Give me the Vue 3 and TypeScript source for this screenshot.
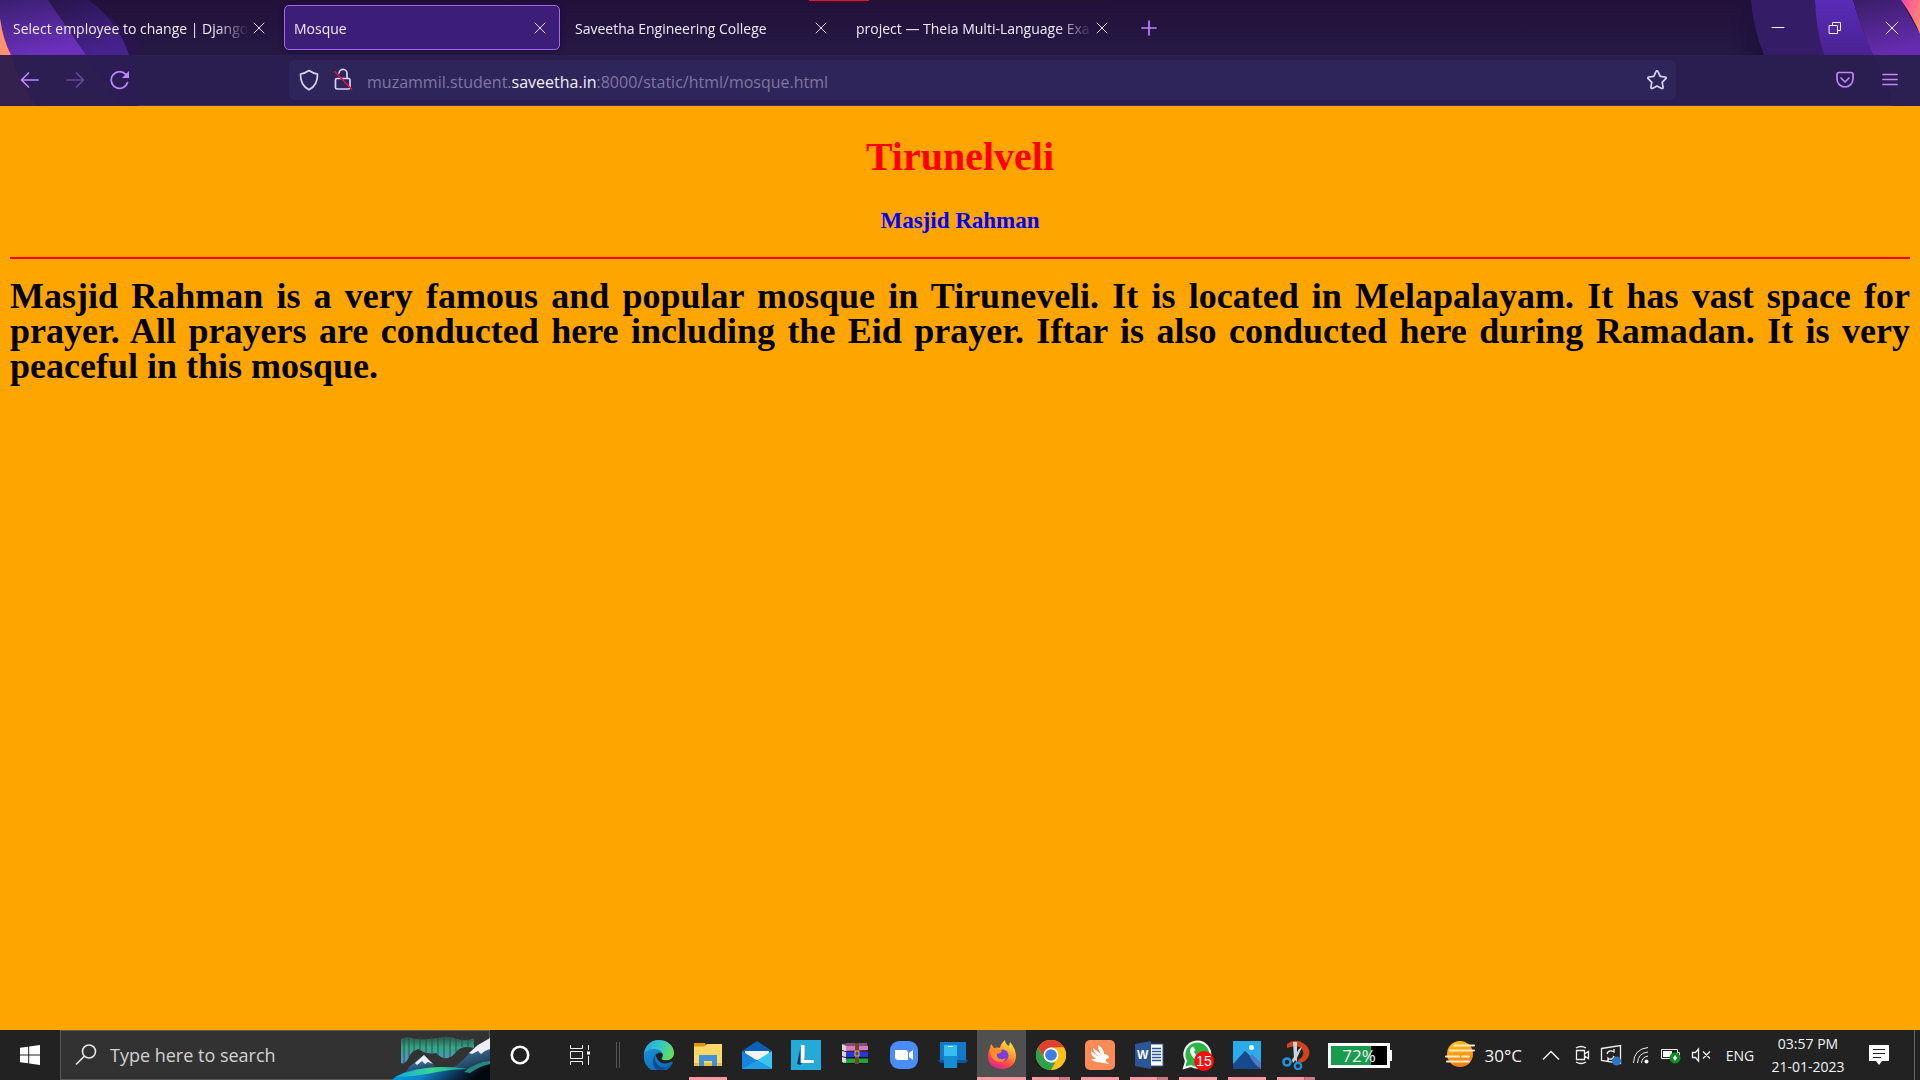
<script setup lang="ts">
import { ref } from 'vue'

interface Tab {
  title: string
  active?: boolean
}

const tabs: Tab[] = [
  { title: 'Select employee to change | Django' },
  { title: 'Mosque', active: true },
  { title: 'Saveetha Engineering College' },
  { title: 'project — Theia Multi-Language Exa' },
]

type Mark = 'none' | 'single' | 'multi' | 'focus'
const apps: { id: string; name: string; mark: Mark }[] = [
  { id: 'edge', name: 'Microsoft Edge', mark: 'none' },
  { id: 'files', name: 'File Explorer', mark: 'single' },
  { id: 'mail', name: 'Mail', mark: 'none' },
  { id: 'lenovo', name: 'Lenovo Vantage', mark: 'none' },
  { id: 'winrar', name: 'WinRAR', mark: 'none' },
  { id: 'zoom', name: 'Zoom', mark: 'none' },
  { id: 'phone', name: 'Phone Link', mark: 'none' },
  { id: 'firefox', name: 'Firefox', mark: 'focus' },
  { id: 'chrome', name: 'Google Chrome', mark: 'multi' },
  { id: 'swift', name: 'Swift', mark: 'single' },
  { id: 'word', name: 'Word', mark: 'multi' },
  { id: 'whatsapp', name: 'WhatsApp', mark: 'single' },
  { id: 'photos', name: 'Photos', mark: 'single' },
  { id: 'snip', name: 'Snipping Tool', mark: 'multi' },
]

const address = ref('')
const query = ref('')
const charge = 72
</script>

<template>
  <div class="desktop">
    <header class="browser">
      <svg class="art art-left" width="140" height="106" viewBox="0 0 140 106" aria-hidden="true">
        <defs>
          <linearGradient id="bandA" x1="0" y1="0" x2="0.3" y2="1">
            <stop offset="0" stop-color="#3a1f70" />
            <stop offset="1" stop-color="#6a30bb" />
          </linearGradient>
          <linearGradient id="bandB" x1="0" y1="0" x2="0.5" y2="1">
            <stop offset="0" stop-color="#27154a" />
            <stop offset="1" stop-color="#46228c" />
          </linearGradient>
        </defs>
        <path d="M88 0C108 14 134 36 153 55H129z" fill="#29144b" />
        <path d="M48 0H88C108 14 123 35 129 55H86z" fill="url(#bandB)" />
        <path d="M0 0H48L86 55H0z" fill="url(#bandA)" />
        <path d="M0 18Q3 40 11 55H0z" fill="#ff9070" />
        <path d="M0 55H11Q20 82 37 106H0z" fill="#35214e" />
        <path d="M11 55H86L121 106H37Q20 82 11 55z" fill="#2d1e52" />
        <path d="M86 55H129Q138 80 138 106H121z" fill="#2b1d54" />
      </svg>
      <svg class="art art-right" width="190" height="106" viewBox="0 0 190 106" aria-hidden="true">
        <defs>
          <linearGradient id="shade" x1="0" y1="0" x2="1" y2="0">
            <stop offset="0" stop-color="#1e103a" stop-opacity="0" />
            <stop offset="1" stop-color="#1c1038" />
          </linearGradient>
          <linearGradient id="bandC" x1="0" y1="0" x2="0" y2="1">
            <stop offset="0" stop-color="#5a2cb8" />
            <stop offset="1" stop-color="#4a2292" />
          </linearGradient>
          <linearGradient id="bandD" x1="0" y1="0" x2="0.3" y2="1">
            <stop offset="0" stop-color="#391d68" />
            <stop offset="1" stop-color="#652cae" />
          </linearGradient>
          <linearGradient id="bandE" x1="0" y1="0" x2="1" y2="0.5">
            <stop offset="0" stop-color="#ff45a5" />
            <stop offset="1" stop-color="#ff8578" />
          </linearGradient>
        </defs>
        <path d="M0 0H21Q24 30 34 55H0z" fill="url(#shade)" />
        <path d="M21 0H85Q87 32 94 55H34Q23 28 21 0z" fill="#341c66" />
        <path d="M85 0H123Q131 28 143 55H94Q86 30 85 0z" fill="url(#bandC)" />
        <path d="M123 0H171L190 34V55H143Q131 28 123 0z" fill="url(#bandD)" />
        <path d="M171 0H190V34Q183 17 171 0z" fill="url(#bandE)" />
        <path d="M143 55H190V106H162Q157 82 143 55z" fill="#2c2053" />
      </svg>
      <div class="capture" aria-hidden="true"></div>

      <div class="tabstrip">
        <div class="tabs" role="tablist">
          <div v-for="t in tabs" :key="t.title" class="tab" :class="{ active: t.active }" role="tab" :aria-selected="!!t.active">
            <span class="tab-title">{{ t.title }}</span>
            <button class="tab-close" type="button" aria-label="Close tab">
              <svg width="12" height="12" viewBox="0 0 12 12"><path d="M1 1l10 10M11 1L1 11" /></svg>
            </button>
          </div>
        </div>
        <button class="newtab" type="button" aria-label="New tab">
          <svg width="16" height="16" viewBox="0 0 16 16"><path d="M8 1v14M1 8h14" /></svg>
        </button>
        <div class="window-buttons">
          <button type="button" aria-label="Minimize">
            <svg width="14" height="14" viewBox="0 0 14 14"><path d="M1 6.500h12" /></svg>
          </button>
          <button type="button" aria-label="Restore">
            <svg width="14" height="14" viewBox="0 0 14 14"><path d="M1.500 4.500h8v8h-8zM4.500 4.500v-3h8v8h-3" /></svg>
          </button>
          <button type="button" aria-label="Close">
            <svg width="14" height="14" viewBox="0 0 14 14"><path d="M1 1l12 12M13 1L1 13" /></svg>
          </button>
        </div>
      </div>

      <nav class="toolbar">
        <div class="nav-buttons">
          <button type="button" aria-label="Back">
            <svg width="20" height="20" viewBox="0 0 20 20"><path d="M18 10H2M8.500 3L1.500 10L8.500 17" /></svg>
          </button>
          <button type="button" aria-label="Forward" class="dim">
            <svg width="20" height="20" viewBox="0 0 20 20"><path d="M2 10H18M11.500 3L18.500 10L11.500 17" /></svg>
          </button>
          <button type="button" aria-label="Reload">
            <svg width="20" height="20" viewBox="0 0 20 20">
              <path d="M17.500 12.500A8.300 8.300 0 1 1 15.500 4.200" />
              <path d="M19 1v7h-7z" fill="#c185ff" stroke="none" />
            </svg>
          </button>
        </div>
        <div class="urlbar">
          <svg width="20" height="22" viewBox="0 0 20 22" aria-hidden="true">
            <path d="M10 1.500C7.500 3.300 4.500 4.500 1.500 5C1.300 11.500 3.500 17.500 10 20.800C16.500 17.500 18.700 11.500 18.500 5C15.500 4.500 12.500 3.300 10 1.500z" />
          </svg>
          <svg width="20" height="24" viewBox="0 0 20 24" aria-hidden="true">
            <path d="M6 5a4 4 0 0 1 8 1v4.500M4 10.500h11.500q1.500 0 1.500 1.500v7.500q0 1.500-1.500 1.500H4q-1.500 0-1.500-1.500V12q0-1.500 1.500-1.500z" />
            <path d="M2 4l16.500 17" class="slash" />
          </svg>
          <div class="address">
            <span>muzammil.student.</span><span class="domain">saveetha.in</span><span>:8000/static/html/mosque.html</span>
            <input v-model="address" type="text" aria-label="Address" />
          </div>
          <button type="button" aria-label="Bookmark this page">
            <svg width="22" height="22" viewBox="0 0 22 22">
              <path d="M11 1.800q.7 0 1 .8l2.200 4.700 5.100.7q1.600.4.500 1.700L16.200 13.300l.9 5q.1 1.600-1.400 1.100L11 16.900l-4.700 2.500q-1.500.5-1.400-1.100l.9-5L2.200 9.700Q1.100 8.400 2.700 8l5.100-.7L10 2.600q.3-.8 1-.8z" />
            </svg>
          </button>
        </div>
        <div class="tool-buttons">
          <button type="button" aria-label="Save to Pocket">
            <svg width="18" height="18" viewBox="0 0 18 18">
              <path d="M3 1.500h12q2 0 2 2V8a8 8 0 0 1-16 0V3.500q0-2 2-2zM5 7l4 4 4-4" />
            </svg>
          </button>
          <button type="button" aria-label="Open application menu">
            <svg width="18" height="18" viewBox="0 0 18 18"><path d="M2 3.500h14M2 8.500h14M2 13.500h14" /></svg>
          </button>
        </div>
      </nav>
    </header>

    <main class="page">
      <h1>Tirunelveli</h1>
      <h3>Masjid Rahman</h3>
      <hr />
      <p>
        Masjid Rahman is a very famous and popular mosque in Tiruneveli. It is located in Melapalayam. It has vast
        space for prayer. All prayers are conducted here including the Eid prayer. Iftar is also conducted here during
        Ramadan. It is very peaceful in this mosque.
      </p>
    </main>

    <footer class="taskbar">
      <button class="slot" type="button" aria-label="Start">
        <svg width="20" height="20" viewBox="0 0 20 20" fill="#fff">
          <path d="M0 2.800l8.200-1.100v7.800H0zM9.200 1.500L20 0v9.500H9.200zM0 10.500h8.200v7.800L0 17.200zM9.200 10.500H20V20L9.200 18.500z" />
        </svg>
      </button>
      <label class="search">
        <svg width="22" height="22" viewBox="0 0 22 22" fill="none" stroke="#e8e8e8" stroke-width="1.600">
          <circle cx="14" cy="7.500" r="6.500" /><path d="M9.300 12.200L1 20.500" />
        </svg>
        <input v-model="query" type="text" placeholder="Type here to search" aria-label="Search" />
        <svg class="aurora" width="98" height="48" viewBox="0 0 98 48" aria-hidden="true">
          <defs>
            <linearGradient id="sky" x1="0" y1="0" x2="0" y2="1">
              <stop offset="0" stop-color="#2c5448" /><stop offset="0.400" stop-color="#36a484" /><stop offset="1" stop-color="#5a8fd0" />
            </linearGradient>
            <linearGradient id="peak" x1="0" y1="0" x2="0.400" y2="1">
              <stop offset="0" stop-color="#3f9c98" /><stop offset="0.500" stop-color="#35688c" /><stop offset="1" stop-color="#14263c" />
            </linearGradient>
            <linearGradient id="hill" x1="0" y1="0" x2="1" y2="0.200">
              <stop offset="0" stop-color="#04a2e6" /><stop offset="0.450" stop-color="#0f84c8" /><stop offset="0.800" stop-color="#0a2740" /><stop offset="1" stop-color="#04080e" />
            </linearGradient>
            <linearGradient id="rim" x1="0" y1="0" x2="1" y2="0">
              <stop offset="0" stop-color="#0ca8e8" /><stop offset="0.500" stop-color="#39d88b" /><stop offset="1" stop-color="#1aa0a0" />
            </linearGradient>
          </defs>
          <path d="M9 7Q14 4 20 6T36 7T52 5T66 7T82 6V16Q70 13 64 20Q55 32 44 21Q34 23 27 17Q20 18 17 25Q13 33 9 31z" fill="url(#sky)" />
          <path d="M12 6v26M17 6v19M22 6v14M28 5v13M34 6v15M40 5v17M46 6v18M52 6v21M58 6v20M64 6v14M70 5v10M76 6v10" stroke="#1f5048" stroke-width="1.500" opacity=".6" />
          <path d="M12 43L17 35L32 23Q36 28 40 31L50 41V44z" fill="url(#peak)" />
          <path d="M23 31l9-8 9 9-5-2-3 2-3-3-5 4z" fill="#eceffa" />
          <path d="M47 41Q62 37 72 27L84 14L98 7V48H55z" fill="url(#peak)" />
          <path d="M77 21l9-8 12-7v11l-5 2-4 3-3-3-6 3z" fill="#eceefa" />
          <path d="M0 48Q10 38 35 36Q60 34 78 38Q86 30 98 30V48z" fill="url(#hill)" />
          <path d="M3 45Q25 35 48 35Q66 35 76 37Q60 37 45 40Q22 45 3 45z" fill="url(#rim)" />
          <path d="M72 40Q84 30 98 29V32Q88 34 78 41z" fill="#238a80" />
        </svg>
      </label>
      <button class="slot" type="button" aria-label="Cortana">
        <svg width="20" height="20" viewBox="0 0 20 20"><circle cx="10" cy="10" r="8.200" fill="none" stroke="#fff" stroke-width="2.600" /></svg>
      </button>
      <button class="slot" type="button" aria-label="Task view">
        <svg width="20" height="20" viewBox="0 0 20 20" fill="none" stroke="#f2f2f2">
          <path d="M.5 0v3.500h12V0M.5 20v-3.500h12V20M.5 6.500h12v7H.5zM18.500 0v5M18.500 11v9" />
          <path d="M17 6.500h3v3h-3z" fill="#fff" stroke="none" />
        </svg>
      </button>
      <span class="grip"></span>

      <div class="apps">
        <button v-for="a in apps" :key="a.id" class="app" :class="a.mark" type="button" :aria-label="a.name">
          <svg v-if="a.id === 'edge'" width="30" height="30" viewBox="0 0 30 30">
            <defs>
              <linearGradient id="edgeTop" x1="0" y1="0.300" x2="1" y2="0.600">
                <stop offset="0" stop-color="#2aa6de" /><stop offset="0.500" stop-color="#33c8c6" /><stop offset="1" stop-color="#68e04f" />
              </linearGradient>
              <linearGradient id="edgeLow" x1="0" y1="0" x2="0.600" y2="1">
                <stop offset="0" stop-color="#1b9de2" /><stop offset="1" stop-color="#0f67b8" />
              </linearGradient>
            </defs>
            <path d="M0 14C1 6 6 0 15 0l6 12-3 9 11 1A15 15 0 0 1 0 15z" fill="url(#edgeLow)" />
            <path d="M0 14C1 5 8 0 15 0c9 0 15 6 15 13 0 5-4 7.500-8 7.500-3 0-4.500-1-4.500-2 0-.7 1.300-1.400 1.300-3.500C18.800 11 14 9 10 9 5 9 2 11 0 14z" fill="url(#edgeTop)" />
            <path d="M13 13C9 17 11 24 17 27c5 2 9-1 11-4-2 4-7 7-13 7C8 30 7 17 13 13z" fill="#114a91" />
            <path d="M15 12.500c2.500 0 3.800 1 3.800 2.500 0 2.100-1.300 2.800-1.300 3.500 0 1 1.500 2 4.500 2 3 0 5-1 7-3-1 3-3.500 6-7.500 6-6 0-10-5-9.500-9z" fill="#202020" />
          </svg>
          <svg v-else-if="a.id === 'files'" width="30" height="30" viewBox="0 0 30 30">
            <path d="M1 3h11l2 4H1z" fill="#dc9a0b" /><path d="M1 26V6.500h10L14 4h15v22z" fill="#ffd868" />
            <path d="M1 23h28v3H1z" fill="#f2bd3c" />
            <path d="M6 26V15h18v11h-5v-5h-8v5z" fill="#3f93dc" />
          </svg>
          <svg v-else-if="a.id === 'mail'" width="30" height="30" viewBox="0 0 30 30">
            <path d="M0 11L15 1l15 10v6H0z" fill="#0c61b6" /><path d="M3 11h24v9H3z" fill="#f4f4f4" />
            <path d="M0 29V11l15 9.500L30 29z" fill="#1685dc" /><path d="M15 20.500L30 11v18z" fill="#38c5f4" /><path d="M0 29l15-8.500L30 29z" fill="#1f9ee8" />
          </svg>
          <svg v-else-if="a.id === 'lenovo'" width="30" height="30" viewBox="0 0 30 30">
            <path d="M0 0h30v30H0z" fill="#24aad9" /><path d="M10 5L6 24l3 1 5-5z" fill="#10316a" />
            <text x="8" y="23" font-size="25" font-weight="700" fill="#fff">L</text>
          </svg>
          <svg v-else-if="a.id === 'winrar'" width="30" height="30" viewBox="0 0 30 30">
            <path d="M3 4l4-1h20l1 5H5z" fill="#7c5575" /><path d="M4 6h24v5H4z" fill="#d878bd" />
            <path d="M3 12h25v5H3z" fill="#2738d8" /><path d="M4 11l24-1v2H4z" fill="#3e243a" />
            <path d="M3 18h25v5H3z" fill="#23a52a" /><path d="M2 17h26v1.500H2zM2 23h26v1H2z" fill="#08133c" />
            <path d="M2 4l4 2v5l-4-1zM2 11l4 1v5l-4-1zM2 17l4 1v5l-4-1z" fill="#ddd5d9" />
            <path d="M15 3h4v21h-4z" fill="#754626" /><path d="M15 11h4v5h-4z" fill="none" stroke="#c5b597" stroke-width="1" />
          </svg>
          <svg v-else-if="a.id === 'zoom'" width="30" height="30" viewBox="0 0 30 30">
            <rect x="1" y="1" width="28" height="28" rx="9" fill="#4a8df8" />
            <path d="M6 10h10q3 0 3 3v7H9q-3 0-3-3zM20 13l4-3v10l-4-3z" fill="#fff" />
          </svg>
          <svg v-else-if="a.id === 'phone'" width="30" height="30" viewBox="0 0 30 30">
            <path d="M2 2h26v20H2z" fill="#1379c9" /><path d="M0 20h30q-1 3-3 3H3q-2 0-3-3z" fill="#0a579d" />
            <path d="M6 5h13v23H6z" fill="#35bff0" /><path d="M6 16h13v12H6z" fill="#168cd3" /><path d="M10 6h5v1h-5z" fill="#fff" />
          </svg>
          <svg v-else-if="a.id === 'firefox'" width="30" height="30" viewBox="0 0 30 30">
            <defs>
              <linearGradient id="fox" x1="0.800" y1="0" x2="0.300" y2="1">
                <stop offset="0" stop-color="#fff04a" /><stop offset="0.400" stop-color="#ffa22c" /><stop offset="0.700" stop-color="#ff4b42" /><stop offset="1" stop-color="#e0209b" />
              </linearGradient>
            </defs>
            <path d="M3 8l1-4 3 4q4-1 6 0 1-5 5-8 0 4 4 6l1-4c4 5 6 9 6 14 0 8-6 13-14 13S1 24 1 17c0-4 1-7 2-9z" fill="url(#fox)" />
            <circle cx="15.500" cy="15.500" r="6" fill="#7840d8" />
            <path d="M3 9q5-2 9 0l3 2q-1 2-5 3-1 4 3 5 3 1 6-1-2 5-8 4Q3 20 3 9z" fill="#ff8c2a" />
          </svg>
          <svg v-else-if="a.id === 'chrome'" width="30" height="30" viewBox="0 0 30 30">
            <circle cx="15" cy="15" r="15" fill="#fbc116" />
            <path d="M2 7.500A15 15 0 0 1 28 7.500H15L8.500 18.700z" fill="#df4030" />
            <path d="M2 7.500L8.500 18.700 15 22.500h6.500L15 30A15 15 0 0 1 2 7.500z" fill="#2ca24c" />
            <path d="M15 30l6.500-11.200V7.500H28A15 15 0 0 1 15 30z" fill="#fbc116" />
            <circle cx="15" cy="15" r="7.500" fill="#fff" /><circle cx="15" cy="15" r="5.800" fill="#3d7de4" />
          </svg>
          <svg v-else-if="a.id === 'swift'" width="30" height="30" viewBox="0 0 30 30">
            <rect width="30" height="30" rx="5" fill="#fb8b56" />
            <path d="M13 5C18 8 19 11 19 14C22 14 24 16 24 18L21 19C20 21 22 22 24 24C17 22 11 24 6 19L11 19C7 16 6 14 6 11L14 17C10 13 8 11 8 8L16 14C14 11 13 9 13 5z" fill="#fff" />
          </svg>
          <svg v-else-if="a.id === 'word'" width="30" height="30" viewBox="0 0 30 30">
            <path d="M15 4h14v22H15z" fill="#fff" stroke="#2b579a" /><path d="M18 8.500h9M18 11.500h9M18 14.500h9M18 17.500h9M18 20.500h9" stroke="#2b579a" stroke-width="1.500" />
            <path d="M1 4l16-3v28L1 26z" fill="#2b579a" />
            <text x="3" y="19" font-size="12" font-weight="700" fill="#fff">W</text>
          </svg>
          <svg v-else-if="a.id === 'whatsapp'" width="34" height="34" viewBox="0 0 34 34">
            <path d="M3 30l2-7A13 13 0 1 1 10 28z" fill="#29b845" stroke="#fff" stroke-width="2" />
            <path d="M11 9q2-1 3 3l-1 2q2 4 5 5l2-2q4 2 3 4-6 5-12-3-4-6 0-9z" fill="#fff" />
            <circle cx="23" cy="23" r="10" fill="#f90d0d" />
            <text x="23" y="28" font-size="14" text-anchor="middle" fill="#fff">15</text>
          </svg>
          <svg v-else-if="a.id === 'photos'" width="30" height="30" viewBox="0 0 30 30">
            <path d="M1 1h28v28H1z" fill="#29adea" /><path d="M1 26L13 11l16 15v3H1z" fill="#174a8c" /><path d="M16 19l4-5 9 9v6z" fill="#5579c8" /><path d="M1 24l12-13 14 18H1z" fill="#174a8c" /><circle cx="19.500" cy="7.500" r="2.500" fill="#fff" />
          </svg>
          <svg v-else width="30" height="30" viewBox="0 0 30 30">
            <path d="M6 4Q14-2 22 3T28 15Q26 22 18 23L17 20Q25 16 21 9 17 4 6 8z" fill="#d4421a" />
            <path d="M12 2h4v20l-3-3zM21 7l-5 11-4 5-1-3 7-11z" fill="#c9d3da" />
            <circle cx="6" cy="22" r="3.500" fill="none" stroke="#2291dc" stroke-width="2.600" /><circle cx="17" cy="26" r="3.200" fill="none" stroke="#2291dc" stroke-width="2.400" />
          </svg>
        </button>
      </div>

      <div class="charge">
        <span class="charge-body">
          <span class="charge-fill" :style="{ width: charge + '%' }"></span>
          <span class="charge-text">{{ charge }}%</span>
        </span>
        <span class="charge-tip"></span>
      </div>

      <div class="tray">
        <button class="weather" type="button">
          <svg width="30" height="28" viewBox="0 0 30 28">
            <defs>
              <linearGradient id="sun" x1="0" y1="0" x2="0.200" y2="1"><stop offset="0" stop-color="#ffc40d" /><stop offset="1" stop-color="#f3801c" /></linearGradient>
            </defs>
            <circle cx="15" cy="13" r="13" fill="url(#sun)" />
            <path d="M9 4.500h20M5 9.500h24M1 15.500h13M17 15.500h7M2 20.500h22" stroke="#ffe9c4" stroke-width="2" stroke-linecap="round" />
          </svg>
          <span>30°C</span>
        </button>
        <button class="cell" type="button" aria-label="Show hidden icons">
          <svg width="18" height="12" viewBox="0 0 18 12"><path d="M1 10.500l8-8 8 8" stroke-width="1.500" /></svg>
        </button>
        <button class="cell" type="button" aria-label="Meet now">
          <svg width="20" height="20" viewBox="0 0 20 20"><path d="M5.500 5.500h8v9h-8zM13.500 9l4-2.500v7l-4-2.500M5 3q5-3 10 0M5 17q5 3 10 0" stroke-width="1.300" /></svg>
        </button>
        <button class="cell" type="button" aria-label="Windows Update">
          <svg width="22" height="22" viewBox="0 0 22 22"><path d="M1.500 4.500l19-3v18l-19-3zM7 10q1-4 5-3l2 1V5M14 12q-1 4-5 3l-1-1v3" stroke-width="1.300" /><circle cx="16.500" cy="17" r="4.500" fill="#2f77c4" stroke="none" /></svg>
        </button>
        <button class="cell" type="button" aria-label="Network">
          <svg width="18" height="18" viewBox="0 0 18 18"><path d="M1.500 17Q2 3 16 1.500M5.500 17Q6 7 16 6M9.500 17q.5-6 6.500-7" /><circle cx="14.500" cy="15.500" r="2" fill="#fff" stroke="none" /></svg>
        </button>
        <button class="cell" type="button" aria-label="Battery">
          <svg width="20" height="18" viewBox="0 0 20 18"><path d="M.5 3.500h16v9H.5zM17 6.500h1.500v3H17" /><path d="M2 5h9v6H2z" fill="#fff" stroke="none" /><circle cx="14" cy="12" r="5.500" fill="#0b8f21" stroke="none" /><path d="M14 9l2 3-2 3-2-3z" fill="#fff" stroke="none" /></svg>
        </button>
        <button class="cell" type="button" aria-label="Volume muted">
          <svg width="20" height="16" viewBox="0 0 20 16"><path d="M1.500 5.500h3L7.500 2v12l-3-3.500h-3zM12 4.500l7 7M19 4.500l-7 7" stroke-width="1.300" /></svg>
        </button>
        <button class="lang" type="button">ENG</button>
        <button class="clock" type="button"><span>03:57 PM</span><span>21-01-2023</span></button>
        <button class="notes" type="button" aria-label="Notifications">
          <svg width="20" height="20" viewBox="0 0 20 20"><path d="M0 0h20v16h-7l-3 4-3-4H0z" fill="#fff" stroke="none" /><path d="M4 4.500h12M4 8.500h12M4 12.500h8" stroke="#222" /></svg>
        </button>
        <span class="peek"></span>
      </div>
    </footer>
  </div>
</template>

<style>
body {
  margin: 0;
  background: #ffa500;
}
</style>

<style scoped>
.desktop {
  display: flex;
  flex-direction: column;
  min-height: 100vh;
  background: #ffa500;
  font-family: 'Open Sans', 'Noto Sans', sans-serif;
}
button {
  display: flex;
  align-items: center;
  justify-content: center;
  margin: 0;
  padding: 0;
  border: 0;
  background: none;
  color: inherit;
  font: inherit;
}
svg {
  display: block;
  flex: none;
}

/* Browser chrome */
.browser {
  position: relative;
  background: linear-gradient(#22103a, #251944 55px, #2a1d50 55px);
  border-bottom: 1px solid #3b2c62;
  color: #f0eafc;
}
.browser button svg,
.urlbar > svg {
  fill: none;
  stroke: #c185ff;
  stroke-width: 1.7;
  stroke-linecap: round;
  stroke-linejoin: round;
}
.art {
  position: absolute;
  top: 0;
}
.art-left {
  left: 0;
}
.art-right {
  right: 0;
}
.capture {
  position: absolute;
  top: 0;
  left: 809px;
  width: 301px;
  height: 1px;
  background: linear-gradient(90deg, #ee1122 60px, #1c1a1c 60px);
}
.tabstrip {
  position: relative;
  display: flex;
  height: 55px;
}
.tabs {
  display: flex;
  gap: 5px;
  padding: 5px 0 5px 3px;
}
.tab {
  box-sizing: border-box;
  display: flex;
  align-items: center;
  width: 276px;
  height: 45px;
  padding: 0 9px;
  border: 1px solid transparent;
  border-radius: 5px;
  font-size: 14px;
}
.tab.active {
  background: #3c1e78;
  border-color: #a667f0;
  box-shadow: 0 0 5px #160b2b;
}
.tab-title {
  flex: 1;
  min-width: 0;
  padding-top: 2px;
  overflow: hidden;
  white-space: nowrap;
  mask-image: linear-gradient(90deg, #000 calc(100% - 34px), transparent);
}
.browser .tab-close {
  width: 20px;
  height: 20px;
}
.browser .tab-close svg {
  stroke: #e6dcf5;
  stroke-width: 1;
}
.newtab {
  width: 50px;
  margin-left: 2px;
}
.window-buttons {
  display: flex;
  margin-left: auto;
}
.window-buttons button {
  width: 57px;
}
.browser .window-buttons svg {
  stroke: #f6f0ff;
  stroke-width: 1;
  stroke-linejoin: miter;
}
.toolbar {
  position: relative;
  display: flex;
  align-items: center;
  height: 50px;
}
.nav-buttons {
  display: flex;
  width: 282px;
  padding-left: 7px;
}
.nav-buttons button,
.tool-buttons button {
  width: 45px;
  height: 40px;
}
.dim {
  opacity: 0.4;
}
.urlbar {
  display: flex;
  flex: 1;
  align-items: center;
  gap: 14px;
  box-sizing: border-box;
  height: 40px;
  padding: 0 8px 0 10px;
  border-radius: 5px;
  background: #2e255b;
}
.urlbar > svg,
.browser .urlbar button svg {
  stroke: #dcd4f4;
}
.urlbar .slash {
  stroke: #e8123c;
}
.address {
  position: relative;
  flex: 1;
  padding-top: 3px;
  font-size: 16px;
  color: #80779f;
  white-space: nowrap;
}
.address input {
  position: absolute;
  inset: 0;
  width: 100%;
  border: 0;
  background: transparent;
  outline: none;
  color: #fff;
  font: inherit;
}
.domain {
  color: #f3effd;
}
.tool-buttons {
  display: flex;
  justify-content: flex-end;
  width: 236px;
  padding-right: 8px;
}

/* Web page */
.page {
  flex: 1;
  padding: 28px 10px;
  font-family: 'Liberation Serif', 'Times New Roman', serif;
}
.page h1,
.page h3 {
  margin: 0;
  text-align: center;
}
.page h1 {
  color: #f00;
  font-size: 40px;
  line-height: 45px;
}
.page h3 {
  margin-top: 28px;
  color: #00f;
  font-size: 23px;
  line-height: 28px;
}
.page hr {
  height: 2px;
  margin: 22px 0 20px;
  border: 0;
  background: #f00;
}
.page p {
  margin: 0;
  color: #000;
  font-size: 36px;
  font-weight: 700;
  line-height: 35px;
  text-align: justify;
}

/* Taskbar */
.taskbar {
  display: flex;
  height: 50px;
  background: #222;
  color: #f4f4f4;
}
.slot {
  width: 60px;
}
.search {
  position: relative;
  box-sizing: border-box;
  display: flex;
  align-items: center;
  gap: 13px;
  width: 430px;
  padding-left: 14px;
  border: 1px solid #5a5a5a;
  background: #323232;
}
.search input {
  flex: 1;
  min-width: 0;
  padding: 0;
  border: 0;
  outline: none;
  background: none;
  color: #fff;
  font: inherit;
  font-size: 18px;
}
.search input::placeholder {
  color: #d2d2d2;
  opacity: 1;
}
.aurora {
  position: absolute;
  right: -1px;
  bottom: -1px;
}
.grip {
  align-self: center;
  width: 2px;
  height: 26px;
  margin: 0 14px 0 6px;
  border: solid #555;
  border-width: 0 1px;
}
.apps {
  display: flex;
}
.app {
  position: relative;
  width: 49px;
  font-family: 'Liberation Sans', Arial, sans-serif;
}
.app.focus {
  background: #505050;
}
.single::after,
.multi::after,
.focus::after {
  content: '';
  position: absolute;
  right: 5px;
  bottom: 0;
  left: 6px;
  height: 3px;
  background: #ff98a2;
}
.multi::after {
  background: linear-gradient(90deg, #ff98a2 27px, #8a5a64 27px, #cb7a83 28px);
}
.focus::after {
  right: 0;
  left: 0;
}
.charge {
  display: flex;
  align-items: center;
  margin-left: 8px;
}
.charge-body {
  position: relative;
  width: 56px;
  height: 19px;
  border: 3px solid #fff;
  background: #000;
}
.charge-fill {
  display: block;
  height: 100%;
  background: #189b4d;
}
.charge-text {
  position: absolute;
  inset: 0;
  font-size: 17px;
  line-height: 19px;
  text-align: center;
}
.charge-tip {
  width: 2px;
  height: 11px;
  background: #fff;
}
.tray {
  display: flex;
  align-items: stretch;
  margin-left: auto;
}
.weather {
  gap: 10px;
  margin-right: 14px;
  font-size: 17px;
}
.cell svg {
  fill: none;
  stroke: #f0f0f0;
}
.cell {
  width: 30px;
}
.lang {
  width: 48px;
  font-size: 14px;
}
.clock {
  flex-direction: column;
  width: 88px;
  font-size: 14px;
  line-height: 23px;
}
.notes {
  width: 54px;
}
.peek {
  width: 5px;
  margin-left: 8px;
  border-left: 1px solid #666;
}
</style>
